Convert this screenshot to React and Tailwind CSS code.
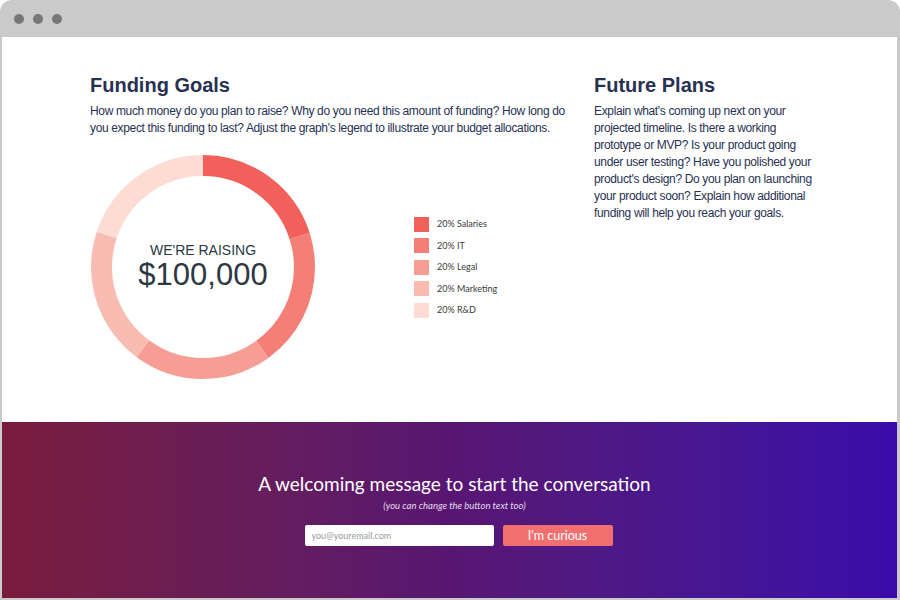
import React from 'react';

const segments = [
  { label: '20% Salaries', color: '#f1605a' },
  { label: '20% IT', color: '#f47f77' },
  { label: '20% Legal', color: '#f69e94' },
  { label: '20% Marketing', color: '#f9bcb2' },
  { label: '20% R&D', color: '#fddcd3' },
];

const Donut = () => {
  const r = 101.5;
  const c = 2 * Math.PI * r;
  const seg = c / segments.length;
  return (
    <div className="relative w-[224px] h-[224px] shrink-0">
      <svg width="224" height="224" viewBox="0 0 224 224" className="-rotate-90">
        {segments.map((s, i) => (
          <circle
            key={s.label}
            cx="112"
            cy="112"
            r={r}
            fill="none"
            stroke={s.color}
            strokeWidth="21"
            strokeDasharray={`${seg} ${c - seg}`}
            strokeDashoffset={-seg * i}
          />
        ))}
      </svg>
      <div className="absolute inset-0 flex flex-col items-center justify-center text-[#2c3842] font-['Liberation_Sans',Arial,sans-serif]">
        <div className="text-[14px] leading-[16px]">WE'RE RAISING</div>
        <div className="text-[31px] leading-[34px]">$100,000</div>
      </div>
    </div>
  );
};

const App = () => {
  return (
    <div className="w-[900px] h-[600px] bg-white">
      <div className="w-full h-full bg-[#cacaca] rounded-t-[12px] flex flex-col pl-[2px] pr-[3px] pb-[2px]">
        {/* title bar */}
        <div className="h-[37px] shrink-0 flex items-center gap-[9px] pl-[12px]">
          <span className="w-[10px] h-[10px] rounded-full bg-[#777777]" />
          <span className="w-[10px] h-[10px] rounded-full bg-[#777777]" />
          <span className="w-[10px] h-[10px] rounded-full bg-[#777777]" />
        </div>

        {/* content */}
        <div className="h-[385px] shrink-0 bg-white pl-[88px] pt-[36px] flex font-['Liberation_Sans',Arial,sans-serif]">
          <div className="w-[504px]">
            <h1 className="text-[20px] leading-[24px] font-bold text-[#283152]">Funding Goals</h1>
            <p className="mt-[6px] w-[488px] text-[12px] leading-[17px] tracking-[-0.35px] text-[#283152]">
              How much money do you plan to raise? Why do you need this amount of funding? How long do you expect this funding to last? Adjust the graph's legend to illustrate your budget allocations.
            </p>
            <div className="mt-[18px] flex items-center pl-[1px]">
              <Donut />
              <div className="ml-[99px] flex flex-col gap-[6.5px] font-['Lato',sans-serif]">
                {segments.map((s) => (
                  <div key={s.label} className="flex items-center gap-[8px]">
                    <span className="w-[15px] h-[15px]" style={{ backgroundColor: s.color }} />
                    <span className="text-[9px] text-[#3b3b3b]">{s.label}</span>
                  </div>
                ))}
              </div>
            </div>
          </div>
          <div className="w-[224px]">
            <h2 className="text-[20px] leading-[24px] font-bold text-[#283152]">Future Plans</h2>
            <p className="mt-[6px] text-[12px] leading-[17px] tracking-[-0.35px] text-[#283152]">
              Explain what's coming up next on your projected timeline. Is there a working prototype or MVP? Is your product going under user testing? Have you polished your product's design? Do you plan on launching your product soon? Explain how additional funding will help you reach your goals.
            </p>
          </div>
        </div>

        {/* call to action */}
        <div className="flex-1 bg-gradient-to-r from-[#7a1b3c] via-[#581672] to-[#3a0aaa] flex flex-col items-center pt-[50px] font-['Lato',sans-serif]">
          <h3 className="ml-[10px] text-[19px] leading-[24px] text-white">A welcoming message to start the conversation</h3>
          <p className="ml-[10px] mt-[3px] text-[9.5px] italic text-[#e6dcf0]">(you can change the button text too)</p>
          <div className="ml-[18px] mt-[12px] flex gap-[9px]">
            <input
              placeholder="you@youremail.com"
              className="w-[189px] h-[21px] rounded-[2px] bg-white px-[7px] text-[9px] text-[#555] placeholder:text-[#999] outline-none"
            />
            <button className="w-[110px] h-[21px] rounded-[2px] bg-[#f26f70] text-white text-[12.5px] leading-[21px]">
              I'm curious
            </button>
          </div>
        </div>
      </div>
    </div>
  );
};

export default App;
